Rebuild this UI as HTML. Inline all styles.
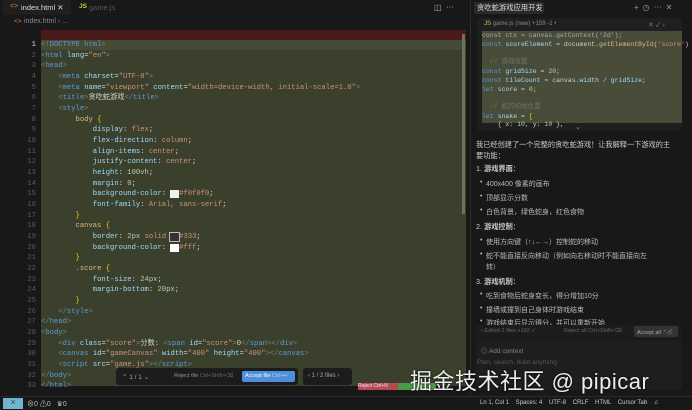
<!DOCTYPE html>
<html><head><meta charset="utf-8"><style>
*{margin:0;padding:0;box-sizing:border-box}
body{width:692px;height:410px;overflow:hidden;background:#181818;font-family:"Liberation Sans","Noto Sans CJK SC",sans-serif;position:relative;color:#ccc}
.abs{position:absolute;white-space:nowrap}
.code{position:absolute;left:41px;top:30px;width:425px;height:356px;background:#3b402d}
.ln{position:absolute;left:0;width:36px;text-align:right;font:7.2px "Liberation Mono",monospace;color:#5a5a5a}
.cl{position:absolute;left:41px;font:7.2px/10px "Liberation Mono","Noto Sans CJK SC",monospace;white-space:pre;color:#d4d4d4}
.p{color:#808080}.t{color:#569cd6}.a{color:#9cdcfe}.s{color:#ce9178}.y{color:#d7ba7d}.n{color:#b5cea8}.k{color:#c586c0}.b{color:#ffd700}
.rt{font-size:7.2px;color:#ccc;position:absolute;left:476px;white-space:nowrap}
.bul{position:absolute;left:486px;font-size:7px;color:#bbb;white-space:nowrap}
.bul:before{content:"•";position:absolute;left:-6px}
.jc{position:absolute;left:482px;font:6.5px/9px "Liberation Mono",monospace;white-space:pre}
</style></head><body>
<div class="abs" style="left:0;top:0;width:468px;height:15px;background:#181818"></div>
<div class="abs" style="left:3px;top:0;width:68px;height:15px;background:#1f1f1f"></div>
<div class="abs" style="left:10px;top:3px;font-size:7px;color:#e37933">&lt;&gt;</div>
<div class="abs" style="left:21px;top:3px;font-size:7.5px;color:#ddd">index.html ✕</div>
<div class="abs" style="left:79px;top:3px;font-size:6.5px;color:#cbcb41;font-weight:bold">JS</div>
<div class="abs" style="left:89px;top:3px;font-size:7.5px;color:#555">game.js</div>
<div class="abs" style="left:434px;top:2px;font-size:8px;color:#aaa">◫ &nbsp;⋯</div>
<div class="abs" style="left:14px;top:18px;font-size:6.5px;color:#e37933">&lt;&gt;</div>
<div class="abs" style="left:24px;top:18px;font-size:7px;color:#888">index.html › ...</div>
<div class="code"></div>
<div class="abs" style="left:41px;top:30px;width:425px;height:10px;background:#4a1a1a"></div>
<div class="abs" style="left:41px;top:40px;width:425px;height:10px;background:#464b36"></div>
<div class="abs" style="left:462px;top:34px;width:3px;height:180px;background:#6d7258"></div>

<div class="ln" style="top:41px;color:#ddd">1</div><div class="ln" style="top:52px">2</div><div class="ln" style="top:62px">3</div><div class="ln" style="top:73px">4</div><div class="ln" style="top:84px">5</div><div class="ln" style="top:94px">6</div><div class="ln" style="top:105px">7</div><div class="ln" style="top:116px">8</div><div class="ln" style="top:126px">9</div><div class="ln" style="top:137px">10</div><div class="ln" style="top:148px">11</div><div class="ln" style="top:158px">12</div><div class="ln" style="top:169px">13</div><div class="ln" style="top:180px">14</div><div class="ln" style="top:190px">15</div><div class="ln" style="top:201px">16</div><div class="ln" style="top:212px">17</div><div class="ln" style="top:222px">18</div><div class="ln" style="top:233px">19</div><div class="ln" style="top:244px">20</div><div class="ln" style="top:254px">21</div><div class="ln" style="top:265px">22</div><div class="ln" style="top:276px">23</div><div class="ln" style="top:286px">24</div><div class="ln" style="top:297px">25</div><div class="ln" style="top:308px">26</div><div class="ln" style="top:318px">27</div><div class="ln" style="top:329px">28</div><div class="ln" style="top:340px">29</div><div class="ln" style="top:350px">30</div><div class="ln" style="top:361px">31</div><div class="ln" style="top:372px">32</div><div class="ln" style="top:382px">33</div>

<div class="cl" style="top:40px"><span class="p">&lt;!</span><span class="t">DOCTYPE html</span><span class="p">&gt;</span></div>
<div class="cl" style="top:51px"><span class="p">&lt;</span><span class="t">html</span> <span class="a">lang</span>=<span class="s">"en"</span><span class="p">&gt;</span></div>
<div class="cl" style="top:61px"><span class="p">&lt;</span><span class="t">head</span><span class="p">&gt;</span></div>
<div class="cl" style="top:72px">    <span class="p">&lt;</span><span class="t">meta</span> <span class="a">charset</span>=<span class="s">"UTF-8"</span><span class="p">&gt;</span></div>
<div class="cl" style="top:83px">    <span class="p">&lt;</span><span class="t">meta</span> <span class="a">name</span>=<span class="s">"viewport"</span> <span class="a">content</span>=<span class="s">"width=device-width, initial-scale=1.0"</span><span class="p">&gt;</span></div>
<div class="cl" style="top:93px">    <span class="p">&lt;</span><span class="t">title</span><span class="p">&gt;</span>贪吃蛇游戏<span class="p">&lt;/</span><span class="t">title</span><span class="p">&gt;</span></div>
<div class="cl" style="top:104px">    <span class="p">&lt;</span><span class="t">style</span><span class="p">&gt;</span></div>
<div class="cl" style="top:115px">        <span class="y">body</span> <span class="b">{</span></div>
<div class="cl" style="top:125px">            <span class="a">display</span>: <span class="s">flex</span>;</div>
<div class="cl" style="top:136px">            <span class="a">flex-direction</span>: <span class="s">column</span>;</div>
<div class="cl" style="top:147px">            <span class="a">align-items</span>: <span class="s">center</span>;</div>
<div class="cl" style="top:157px">            <span class="a">justify-content</span>: <span class="s">center</span>;</div>
<div class="cl" style="top:168px">            <span class="a">height</span>: <span class="n">100vh</span>;</div>
<div class="cl" style="top:179px">            <span class="a">margin</span>: <span class="n">0</span>;</div>
<div class="cl" style="top:189px">            <span class="a">background-color</span>: <span style="background:#f0f0f0">  </span><span class="s">#f0f0f0</span>;</div>
<div class="cl" style="top:200px">            <span class="a">font-family</span>: <span class="s">Arial, sans-serif</span>;</div>
<div class="cl" style="top:211px">        <span class="b">}</span></div>
<div class="cl" style="top:221px">        <span class="y">canvas</span> <span class="b">{</span></div>
<div class="cl" style="top:232px">            <span class="a">border</span>: <span class="n">2px</span> <span class="s">solid</span> <span style="background:#333;outline:1px solid #bbb">  </span><span class="s">#333</span>;</div>
<div class="cl" style="top:243px">            <span class="a">background-color</span>: <span style="background:#fff">  </span><span class="s">#fff</span>;</div>
<div class="cl" style="top:253px">        <span class="b">}</span></div>
<div class="cl" style="top:264px">        <span class="y">.score</span> <span class="b">{</span></div>
<div class="cl" style="top:275px">            <span class="a">font-size</span>: <span class="n">24px</span>;</div>
<div class="cl" style="top:285px">            <span class="a">margin-bottom</span>: <span class="n">20px</span>;</div>
<div class="cl" style="top:296px">        <span class="b">}</span></div>
<div class="cl" style="top:307px">    <span class="p">&lt;/</span><span class="t">style</span><span class="p">&gt;</span></div>
<div class="cl" style="top:317px"><span class="p">&lt;/</span><span class="t">head</span><span class="p">&gt;</span></div>
<div class="cl" style="top:328px"><span class="p">&lt;</span><span class="t">body</span><span class="p">&gt;</span></div>
<div class="cl" style="top:339px">    <span class="p">&lt;</span><span class="t">div</span> <span class="a">class</span>=<span class="s">"score"</span><span class="p">&gt;</span>分数: <span class="p">&lt;</span><span class="t">span</span> <span class="a">id</span>=<span class="s">"score"</span><span class="p">&gt;</span>0<span class="p">&lt;/</span><span class="t">span</span><span class="p">&gt;&lt;/</span><span class="t">div</span><span class="p">&gt;</span></div>
<div class="cl" style="top:349px">    <span class="p">&lt;</span><span class="t">canvas</span> <span class="a">id</span>=<span class="s">"gameCanvas"</span> <span class="a">width</span>=<span class="s">"400"</span> <span class="a">height</span>=<span class="s">"400"</span><span class="p">&gt;&lt;/</span><span class="t">canvas</span><span class="p">&gt;</span></div>
<div class="cl" style="top:360px">    <span class="p">&lt;</span><span class="t">script</span> <span class="a">src</span>=<span class="s">"game.js"</span><span class="p">&gt;&lt;/</span><span class="t">script</span><span class="p">&gt;</span></div>
<div class="cl" style="top:371px"><span class="p">&lt;/</span><span class="t">body</span><span class="p">&gt;</span></div>
<div class="cl" style="top:381px"><span class="p">&lt;/</span><span class="t">html</span><span class="p">&gt;</span></div>

<div class="abs" style="left:116px;top:368px;width:182px;height:17px;background:#1c1c1c;border-radius:3px"></div>
<div class="abs" style="left:122px;top:373px;font-size:6.5px;color:#aaa">⌃ 1 / 1 ⌄</div>
<div class="abs" style="left:174px;top:373px;font-size:5.5px;color:#999">Reject file <span style="color:#666">Ctrl+Shift+⌫</span></div>
<div class="abs" style="left:242px;top:371px;width:53px;height:11px;background:#4d8fdb;border-radius:2px;font-size:5.5px;color:#fff;padding:2px 3px;overflow:hidden">Accept file <span style="color:#bcd">Ctrl+↵</span></div>
<div class="abs" style="left:303px;top:368px;width:49px;height:17px;background:#1c1c1c;border-radius:3px;font-size:6px;color:#aaa;padding:5px 5px">‹ 1 / 2 files ›</div>
<div class="abs" style="left:358px;top:383px;width:40px;height:7px;background:#b54a55;font-size:5px;color:#eee;overflow:hidden">Reject Ctrl+N</div>
<div class="abs" style="left:398px;top:383px;width:38px;height:7px;background:#4c9a48"></div>

<div class="abs" style="left:470px;top:0;width:222px;height:396px;background:#181818;border-left:1px solid #2a2a2a"></div>
<div class="abs" style="left:474px;top:2px;width:70px;height:12px;background:#2a2a2a;border-radius:2px"></div>
<div class="abs" style="left:477px;top:3px;font-size:7.3px;color:#ddd">贪吃蛇游戏应用开发</div>
<div class="abs" style="left:634px;top:2px;font-size:8px;color:#999;letter-spacing:4px">+◷⋯✕</div>
<div class="abs" style="left:477px;top:18px;width:205px;height:113px;background:#1f1f1f;border-radius:4px"></div>
<div class="abs" style="left:484px;top:21px;font-size:6px;color:#888"><span style="color:#cbcb41">JS</span> game.js (new) +159 -1 •</div>
<div class="abs" style="left:648px;top:20px;font-size:7px;color:#777">✕ ✓ ›</div>
<div class="abs" style="left:482px;top:31px;width:200px;height:92px;background:#4a4c3a"></div>
<div class="jc" style="top:31px;color:#aaa">const ctx = canvas.getContext('2d');</div>
<div class="jc" style="top:40px"><span class="t">const</span> <span class="a">scoreElement</span> = document.<span class="y">getElementById</span>(<span class="s">'score'</span>)</div>
<div class="jc" style="top:57px;color:#6a7a5a">  // 游戏设置</div>
<div class="jc" style="top:67px"><span class="t">const</span> <span class="a">gridSize</span> = <span class="n">20</span>;</div>
<div class="jc" style="top:76px"><span class="t">const</span> <span class="a">tileCount</span> = canvas.<span class="a">width</span> / <span class="a">gridSize</span>;</div>
<div class="jc" style="top:85px"><span class="t">let</span> <span class="a">score</span> = <span class="n">0</span>;</div>
<div class="jc" style="top:102px;color:#6a7a5a">  // 蛇的初始位置</div>
<div class="jc" style="top:112px"><span class="t">let</span> <span class="a">snake</span> = <span class="b">[</span></div>
<div class="jc" style="top:120px">    { x: <span class="n">10</span>, y: <span class="n">10</span> },</div>
<div class="abs" style="left:575px;top:123px;font-size:7px;color:#888">⌄</div>
<div class="rt" style="top:140px">我已经创建了一个完整的贪吃蛇游戏！让我解释一下游戏的主</div>
<div class="rt" style="top:151px">要功能：</div>
<div class="rt" style="top:164px">1. <b>游戏界面</b>：</div>
<div class="bul" style="top:179px">400x400 像素的画布</div>
<div class="bul" style="top:193px">顶部显示分数</div>
<div class="bul" style="top:207px">白色背景，绿色蛇身，红色食物</div>
<div class="rt" style="top:222px">2. <b>游戏控制</b>：</div>
<div class="bul" style="top:237px">使用方向键（↑↓←→）控制蛇的移动</div>
<div class="bul" style="top:251px">蛇不能直接反向移动（例如向右移动时不能直接向左</div>
<div class="abs" style="left:486px;top:262px;font-size:7px;color:#bbb">转）</div>
<div class="rt" style="top:277px">3. <b>游戏机制</b>：</div>
<div class="bul" style="top:291px">吃到食物后蛇身变长，得分增加10分</div>
<div class="bul" style="top:305px">撞墙或撞到自己身体时游戏结束</div>
<div class="bul" style="top:318px">游戏结束后显示得分，并可以重新开始</div>
<div class="abs" style="left:476px;top:325px;width:206px;height:14px;background:#1c1c1c"></div>
<div class="abs" style="left:481px;top:328px;font-size:5.5px;color:#666">› Edited 2 files +192 -/</div>
<div class="abs" style="left:564px;top:328px;font-size:5.5px;color:#666">Reject all Ctrl+Shift+⌫</div>
<div class="abs" style="left:634px;top:326px;width:44px;height:11px;background:#333;border-radius:2px;font-size:5.5px;color:#aaa;padding:2px 3px;overflow:hidden">Accept all ⌃⏎</div>
<div class="abs" style="left:476px;top:340px;width:206px;height:50px;background:#1e1e1e;border-radius:4px"></div>
<div class="abs" style="left:481px;top:345px;font-size:6.5px;color:#888">◎ Add context</div>
<div class="abs" style="left:477px;top:359px;font-size:6.5px;color:#555">Plan, search, build anything</div>

<div class="abs" style="left:0;top:396px;width:692px;height:14px;background:#181818;border-top:1px solid #2a2a2a"></div>
<div class="abs" style="left:3px;top:398px;width:20px;height:11px;background:#6fb5d0;font-size:7px;color:#234;text-align:center">⨯</div>
<div class="abs" style="left:27px;top:399px;font-size:7px;color:#bbb">⊗0 ⚠0 &nbsp; ♛0</div>
<div class="abs" style="left:480px;top:400px;font-size:6px;color:#ccc">Ln 1, Col 1 &nbsp;&nbsp; Spaces: 4 &nbsp;&nbsp; UTF-8 &nbsp;&nbsp; CRLF &nbsp;&nbsp; HTML &nbsp;&nbsp; Cursor Tab &nbsp;&nbsp; ♫</div>

<div class="abs" style="left:410px;top:364px;font-size:22px;color:#eee;letter-spacing:0.5px;text-shadow:0 0 2px #000">掘金技术社区 @ pipicar</div>
</body></html>
